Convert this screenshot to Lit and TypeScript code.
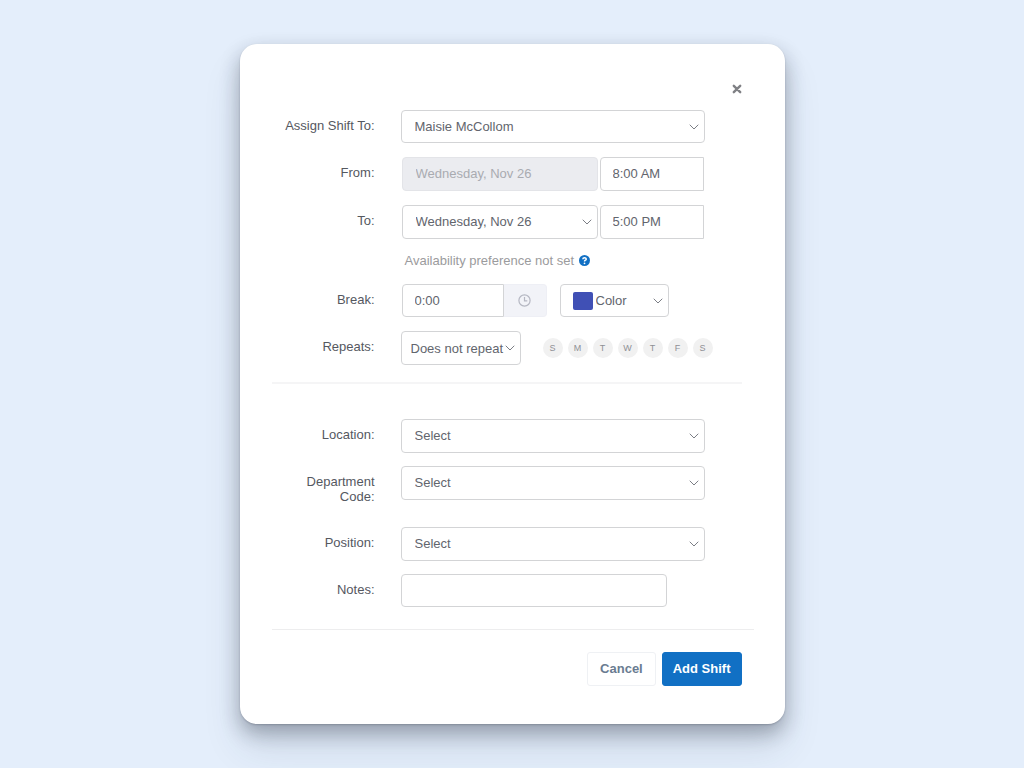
import { LitElement, html, css, nothing } from "lit";
import { customElement } from "lit/decorators.js";
import { classMap } from "lit/directives/class-map.js";

interface SelectSpec {
  id: string;
  options?: string[];
  label?: string;
  disabled?: boolean;
  short?: boolean;
  tight?: boolean;
  swatch?: boolean;
}

const DAYS = [
  ["S", "Sunday"],
  ["M", "Monday"],
  ["T", "Tuesday"],
  ["W", "Wednesday"],
  ["T", "Thursday"],
  ["F", "Friday"],
  ["S", "Saturday"],
];

@customElement("app-root")
class AppRoot extends LitElement {
  static styles = css`
    * {
      box-sizing: border-box;
    }
    :host {
      display: flex;
      align-items: center;
      justify-content: center;
      min-height: 100vh;
      background: #e4eefb;
      font: 13px/15px "Liberation Sans", Arial, sans-serif;
      color: #55585f;
    }
    button,
    input,
    select {
      margin: 0;
      font: inherit;
    }
    .card {
      width: 100%;
      max-width: 545px;
      padding: 36px 43px 38px 32px;
      border-radius: 17px;
      background: #fff;
      box-shadow: 0 24px 38px rgba(40, 55, 85, 0.12), 0 9px 20px rgba(20, 25, 40, 0.32), 0 1px 2px rgba(20, 25, 40, 0.2);
    }
    .head {
      display: flex;
      justify-content: flex-end;
      margin-bottom: 12px;
    }
    .close {
      display: flex;
      align-items: center;
      height: 18px;
      padding: 0;
      border: 0;
      background: none;
      cursor: pointer;
    }
    .rows {
      display: grid;
      gap: 14px;
    }
    .row {
      display: grid;
      grid-template-columns: 103px minmax(0, 304px);
      column-gap: 26px;
    }
    .label {
      padding: 8px 0 0 8px;
      text-align: right;
    }
    .control {
      width: 100%;
      height: 34px;
      padding: 0 12px 1px;
      border: 1px solid #d3d4d6;
      border-radius: 4px;
      background: #fff;
      color: #62656d;
      outline-color: #1170c4;
    }
    .short {
      height: 33px;
    }
    .wrap {
      display: grid;
      align-items: center;
      align-self: start;
      min-width: 0;
    }
    .wrap > * {
      grid-area: 1 / 1;
    }
    .select {
      appearance: none;
      padding: 0 12px 1px 13px;
      cursor: pointer;
    }
    .select:disabled {
      background: #ebecf0;
      border-color: #e3e4e8;
      color: #a9abb1;
      opacity: 1;
      cursor: default;
    }
    .tight {
      padding: 0 9px;
    }
    .swatched {
      padding-left: 35px;
    }
    .chevron {
      justify-self: end;
      margin-right: 6px;
      pointer-events: none;
    }
    .swatch {
      width: 20px;
      height: 18px;
      margin-left: 13px;
      border-radius: 2px;
      background: #4050b5;
      pointer-events: none;
    }
    .pair {
      display: grid;
      grid-template-columns: 196fr 104fr;
      gap: 2px;
      padding: 0 1px;
    }
    .time {
      border-radius: 4px 0 0 4px;
    }
    .hint {
      display: flex;
      align-items: center;
      gap: 5px;
      margin: 0 0 2px;
      padding-left: 4px;
      color: #9b9b9d;
    }
    .help {
      display: flex;
      padding: 0;
      border: 0;
      background: none;
      cursor: pointer;
    }
    .line {
      display: flex;
      align-items: center;
    }
    .break {
      display: flex;
      width: 145px;
      margin: 0 13px 0 1px;
    }
    .amount {
      flex: 1;
      min-width: 0;
      border-radius: 4px 0 0 4px;
    }
    .clock {
      display: grid;
      place-items: center;
      width: 43px;
      padding: 0;
      border: 1px solid #eeeff5;
      border-left: 0;
      border-radius: 0 4px 4px 0;
      background: #f2f3f8;
    }
    .color {
      width: 109px;
    }
    .repeat {
      flex: none;
      width: 120px;
      margin-right: 22px;
    }
    .days {
      display: flex;
      gap: 5px;
    }
    .day {
      flex: none;
      width: 20px;
      height: 20px;
      padding: 0;
      border: 0;
      border-radius: 50%;
      background: #f1f1f1;
      color: #8f9095;
      font-size: 9px;
      line-height: 20px;
      text-align: center;
    }
    .rule {
      height: 1px;
      margin: 0;
      border: 0;
      background: #ededee;
    }
    .soft {
      height: 2px;
      margin: 17px 0 35px;
      background: #f5f5f6;
    }
    .wide {
      margin: 22px -12px 22px 0;
    }
    .lower {
      gap: 13px;
    }
    .tall {
      margin-bottom: 14px;
    }
    .tall .label {
      margin-bottom: -4px;
    }
    .notes {
      max-width: 266px;
    }
    .actions {
      display: flex;
      justify-content: flex-end;
      gap: 6px;
    }
    .button {
      height: 34px;
      padding: 0 12px 1px;
      border: 1px solid #eff1f4;
      border-radius: 3px;
      background: #fff;
      color: #6a7c91;
      font-weight: bold;
      cursor: pointer;
    }
    .primary {
      padding: 0 10px 1px;
      border-color: #1170c4;
      background: #1170c4;
      color: #fff;
    }
  `;

  private select({ id, options = ["Select"], label, disabled = false, short = false, tight = false, swatch = false }: SelectSpec) {
    const classes = { control: true, select: true, short, tight, swatched: swatch };
    return html`<div class="wrap">
      <select id=${id} class=${classMap(classes)} aria-label=${label ?? nothing} ?disabled=${disabled}>
        ${options.map((o) => html`<option>${o}</option>`)}
      </select>
      ${swatch ? html`<span class="swatch"></span>` : nothing}
      ${disabled
        ? nothing
        : html`<svg class="chevron" width="10" height="6" viewBox="0 0 10 6" aria-hidden="true">
            <path d="M1 1 L5 5 L9 1" fill="none" stroke="#7b7e85" stroke-linecap="round" stroke-linejoin="round" />
          </svg>`}
    </div>`;
  }

  render() {
    const day = "Wednesday, Nov 26";
    return html`<form class="card" @submit=${(e: Event) => e.preventDefault()}>
      <div class="head">
        <button class="close" type="button" aria-label="Close">
          <svg width="10" height="10" viewBox="0 0 10 10">
            <path d="M1.8 1.8 L8.2 8.2 M8.2 1.8 L1.8 8.2" stroke="#808185" stroke-width="2.4" stroke-linecap="round" />
          </svg>
        </button>
      </div>
      <div class="rows">
        <div class="row">
          <label class="label" for="assignee">Assign Shift To:</label>
          ${this.select({ id: "assignee", short: true, options: ["Maisie McCollom"] })}
        </div>
        <div class="row">
          <label class="label" for="from-date">From:</label>
          <div class="pair">
            ${this.select({ id: "from-date", disabled: true, options: [day] })}
            <input class="control time" aria-label="From time" value="8:00 AM" />
          </div>
        </div>
        <div class="row">
          <label class="label" for="to-date">To:</label>
          <div class="pair">
            ${this.select({ id: "to-date", options: [day] })}
            <input class="control time" aria-label="To time" value="5:00 PM" />
          </div>
        </div>
        <div class="row">
          <span></span>
          <p class="hint">
            Availability preference not set
            <button class="help" type="button" aria-label="Help">
              <svg width="11" height="11" viewBox="0 0 11 11">
                <circle cx="5.5" cy="5.5" r="5.5" fill="#1170c4" />
                <path d="M3.8 4.2 C3.9 2.3 7.3 2.3 7.2 4.2 C7.2 5.3 5.5 5.2 5.5 6.5" fill="none" stroke="#fff" stroke-width="1.5" />
                <circle cx="5.5" cy="8.3" r="0.9" fill="#fff" />
              </svg>
            </button>
          </p>
        </div>
        <div class="row">
          <label class="label" for="break">Break:</label>
          <div class="line">
            <div class="break">
              <input id="break" class="control short amount" value="0:00" />
              <button class="clock" type="button" aria-label="Choose break length">
                <svg width="13" height="13" viewBox="0 0 13 13" fill="none" stroke="#b5b7c2" stroke-width="1.2">
                  <circle cx="6.5" cy="6.5" r="5.6" />
                  <path d="M6.5 3 V6.8 H9.3" />
                </svg>
              </button>
            </div>
            <div class="color">${this.select({ id: "color", label: "Color", short: true, swatch: true, options: ["Color"] })}</div>
          </div>
        </div>
        <div class="row">
          <label class="label" for="repeats">Repeats:</label>
          <div class="line">
            <div class="repeat">${this.select({ id: "repeats", tight: true, options: ["Does not repeat"] })}</div>
            <div class="days">
              ${DAYS.map(([d, name]) => html`<button class="day" type="button" aria-label=${name}>${d}</button>`)}
            </div>
          </div>
        </div>
      </div>
      <hr class="rule soft" />
      <div class="rows lower">
        <div class="row">
          <label class="label" for="location">Location:</label>
          ${this.select({ id: "location" })}
        </div>
        <div class="row tall">
          <label class="label" for="department">Department Code:</label>
          ${this.select({ id: "department" })}
        </div>
        <div class="row">
          <label class="label" for="position">Position:</label>
          ${this.select({ id: "position" })}
        </div>
        <div class="row">
          <label class="label" for="notes">Notes:</label>
          <input id="notes" class="control short notes" />
        </div>
      </div>
      <hr class="rule wide" />
      <div class="actions">
        <button class="button" type="button">Cancel</button>
        <button class="button primary" type="submit">Add Shift</button>
      </div>
    </form>`;
  }
}
